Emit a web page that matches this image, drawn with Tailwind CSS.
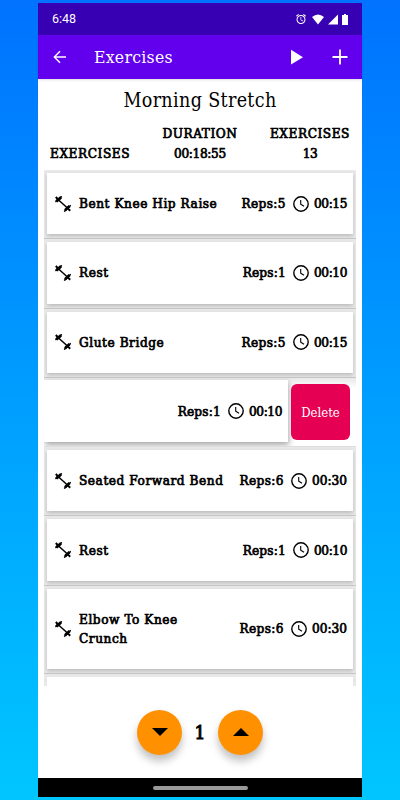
<!DOCTYPE html>
<html lang="en">
<head>
    <meta charset="UTF-8">
    <meta name="viewport" content="width=device-width, initial-scale=1.0">
    <title>Exercises</title>
    <script src="https://cdn.jsdelivr.net/npm/@tailwindcss/browser@4"></script>
</head>
<body class="h-[800px] overflow-hidden bg-linear-to-b from-[#0072ff] to-[#00c6ff] pt-[3px] font-['Roboto_Slab','DejaVu_Serif_Condensed','DejaVu_Serif',serif] text-black">
    <svg class="hidden">
        <symbol id="dumbbell" viewBox="0 0 16 16">
            <path d="M3 3.5 L13 12.5" stroke="black" stroke-width="1.5"/>
            <path d="M0.4 5.8 L6.8 0.4 M9.2 15.6 L15.8 9.2" stroke="black" stroke-width="1.6"/>
            <path d="M1.4 5.4 L6 1.4 M10 14.2 L14.6 10" stroke="black" stroke-width="2.8"/>
            <path d="M0.8 1 L3 3.4 M13 12.6 L15.2 14.8" stroke="black" stroke-width="2"/>
        </symbol>
        <symbol id="clock" viewBox="0 0 16 16">
            <circle cx="8" cy="8" r="7.2" fill="none" stroke="black" stroke-width="1.4"/>
            <path d="M7.7 4V8.2L11 10.3" fill="none" stroke="black" stroke-width="1.1"/>
        </symbol>
    </svg>

    <div class="mx-auto flex h-[794px] w-[324px] flex-col bg-white">
        <!-- status bar -->
        <div class="flex h-8 shrink-0 items-center bg-[#3700b3] pr-[14px] pl-[14px] text-white">
            <span class="font-['Roboto',sans-serif] text-[12.5px]">6:48</span>
            <svg class="ml-auto h-3 w-3" viewBox="0 0 24 24" fill="white"><path d="M22 5.72l-4.6-3.86-1.29 1.53 4.6 3.86L22 5.72zM7.88 3.39L6.6 1.86 2 5.71l1.29 1.53 4.59-3.85zM12.5 8H11v6l4.75 2.85.75-1.23-4-2.37V8zM12 4c-4.97 0-9 4.03-9 9s4.02 9 9 9a9 9 0 0 0 0-18zm0 16c-3.87 0-7-3.13-7-7s3.13-7 7-7 7 3.13 7 7-3.13 7-7 7z"/></svg>
            <svg class="ml-[5px] h-[11px] w-3" viewBox="0 0 12 11" fill="white"><path d="M0 3Q6-2 12 3L6 10.5z"/></svg>
            <svg class="ml-[4px] h-[11px] w-[10px]" viewBox="0 0 10 11" fill="white"><path d="M10 0.5V10.5H0z"/></svg>
            <svg class="ml-[4px] h-[11px] w-[6px]" viewBox="0 0 6 11" fill="white"><path d="M2 0h2v1h2v10H0V1h2z"/></svg>
        </div>

        <!-- app bar -->
        <div class="z-10 flex h-11 shrink-0 items-center bg-[#6200ee] pr-[14px] pl-[15px] text-white shadow-sm">
            <svg class="h-[14px] w-[14px]" viewBox="0 0 14 14" fill="none" stroke="white" stroke-width="1.4"><path d="M13 7H1.5M7 1.2L1.3 7L7 12.8"/></svg>
            <span class="ml-[27px] pt-px text-[17.5px] tracking-[0.25px]">Exercises</span>
            <svg class="ml-auto h-4 w-3" viewBox="0 0 12 16" fill="white"><path d="M0 0.8L12 8.2L0 15.6z"/></svg>
            <svg class="ml-[29px] h-4 w-4" viewBox="0 0 16 16" stroke="white" stroke-width="1.8"><path d="M8 0.5V15.5M0.5 8H15.5"/></svg>
        </div>

        <h1 class="mt-2 h-7 shrink-0 text-center text-[19.5px] leading-7 tracking-[0.35px]">Morning Stretch</h1>

        <div class="mt-2 flex h-[40px] shrink-0 items-start justify-between px-3 text-center text-[13.5px] leading-5 font-medium tracking-[0.55px] [-webkit-text-stroke:0.7px]">
            <div class="pt-5">EXERCISES</div>
            <div>DURATION<br><span class="tracking-[-0.35px]">00:18:55</span></div>
            <div>EXERCISES<br><span class="tracking-[-0.5px]">13</span></div>
        </div>

        <div id="exerciseList" class="mx-1.5 mt-[7px] h-[516px] shrink-0 overflow-hidden"></div>

        <!-- set counter -->
        <div class="flex grow items-center justify-center">
            <button class="flex h-[45px] w-[45px] items-center justify-center rounded-full bg-[#ff9100] shadow-[0_6px_8px_rgba(0,0,0,0.25)]">
                <svg class="h-2 w-4" viewBox="0 0 16 8"><path d="M0 0H16L8 8z"/></svg>
            </button>
            <span class="w-9 text-center text-[19px] font-medium [-webkit-text-stroke:1px]">1</span>
            <button class="flex h-[45px] w-[45px] items-center justify-center rounded-full bg-[#ff9100] shadow-[0_6px_8px_rgba(0,0,0,0.25)]">
                <svg class="h-2 w-4" viewBox="0 0 16 8"><path d="M0 8H16L8 0z"/></svg>
            </button>
        </div>

        <div class="flex h-[19px] shrink-0 items-center justify-center bg-black">
            <div class="h-1 w-[95px] rounded-full bg-[#999999]"></div>
        </div>
    </div>

    <script>
        const exercises = [
            { name: 'Bent Knee Hip Raise', reps: 5, time: '00:15' },
            { name: 'Rest', reps: 1, time: '00:10' },
            { name: 'Glute Bridge', reps: 5, time: '00:15' },
            { name: 'Rest', reps: 1, time: '00:10', swiped: true },
            { name: 'Seated Forward Bend', reps: 6, time: '00:30' },
            { name: 'Rest', reps: 1, time: '00:10' },
            { name: 'Elbow To Knee<br>Crunch', reps: 6, time: '00:30', tall: true },
        ];

        // times with a 1 in them are set a bit narrower
        const stats = e => `
            <span class="${e.reps == 1 ? 'tracking-[0.2px]' : 'tracking-[0.4px]'}">Reps:${e.reps}</span>
            <svg class="ml-[7px] h-4 w-4"><use href="#clock"/></svg>
            <span class="ml-[5px] ${e.time.includes('1') ? 'tracking-[-0.4px]' : ''}">${e.time}</span>`;

        const list = document.getElementById('exerciseList');
        exercises.forEach(e => {
            if (e.swiped) {
                list.innerHTML += `
                <div class="flex h-[69.3px] justify-between overflow-hidden border-b border-[#dddddd] bg-linear-to-b from-[#e8e8e8] to-white to-15% pt-[2px] pr-1.5 text-[13.5px] font-medium">
                    <div class="flex h-[62px] w-[244px] items-center justify-end bg-white pr-[6px] shadow-[1px_3px_6px_rgba(0,0,0,0.35)] [-webkit-text-stroke:0.7px]">${stats(e)}</div>
                    <button class="mt-[4px] h-[56px] w-[59px] rounded-md bg-[#e60053] pt-0.5 text-[13px] font-normal text-white">Delete</button>
                </div>`;
                return;
            }
            list.innerHTML += `
            <div class="${e.tall ? 'h-[88px]' : 'h-[69.3px]'} border-b border-[#c8c8c8] bg-[#e8e8e8] px-[3px] pt-[3px] pb-[4px]">
                <div class="flex h-full items-center bg-white pr-[6px] pl-2 text-[13.5px] leading-[19px] font-medium shadow-[0_2px_4px_rgba(0,0,0,0.2)] [-webkit-text-stroke:0.7px]">
                    <svg class="mr-2 h-4 w-4"><use href="#dumbbell"/></svg>
                    <span class="mr-auto tracking-[0.55px] whitespace-nowrap">${e.name}</span>
                    ${stats(e)}
                </div>
            </div>`;
        });
        // top of the next card, peeking in at the bottom of the list
        list.innerHTML += `
        <div class="h-[69.3px] bg-[#e8e8e8] px-[3px] pt-[3px]">
            <div class="h-full bg-white"></div>
        </div>`;
    </script>
</body>
</html>
